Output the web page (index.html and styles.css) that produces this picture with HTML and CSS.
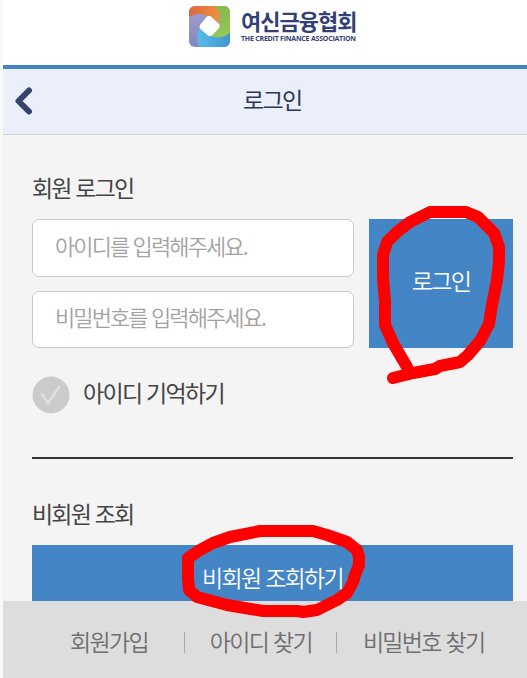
FILE: index.html
```html
<!doctype html>
<html lang="ko">
	<head>
		<meta charset="utf-8" />
		<title>여신금융협회</title>
		<link rel="stylesheet" href="styles.css">
	</head>
	<body>
		<div class="app">
			<header class="brand">
				<svg class="mark" viewBox="0 0 41 41">
					<defs>
						<clipPath id="tile"><rect width="41" height="41" rx="6" /></clipPath>
						<linearGradient id="orange"><stop offset="0" stop-color="#df6840" /><stop offset="1" stop-color="#eb9440" /></linearGradient>
						<linearGradient id="green" x2="0" y2="1"><stop offset="0" stop-color="#86b84e" /><stop offset="1" stop-color="#94c858" /></linearGradient>
						<linearGradient id="blue"><stop offset="0" stop-color="#58bce8" /><stop offset="1" stop-color="#3f96d2" /></linearGradient>
						<linearGradient id="violet" x2="0" y2="1"><stop offset="0" stop-color="#a3a0d4" /><stop offset="1" stop-color="#8088bc" /></linearGradient>
					</defs>
					<g clip-path="url(#tile)">
						<rect width="41" height="41" fill="url(#violet)" />
						<path d="M0 11V0H33L29 20L20 11Q10 5 0 11Z" fill="url(#orange)" />
						<path d="M26 0H41V29Q30 35 20 30L29 20Q35 9 26 0Z" fill="url(#green)" />
						<path d="M10 41Q6 29 12 20L21 29Q31 35 41 27V41Z" fill="url(#blue)" />
						<path d="M18 10.500Q20 9 22 10.500L30 18Q31.500 20 30 22L23 29.500Q21 31 19 29.500L11.500 23Q9.500 21 11 19Z" fill="#fff" />
					</g>
				</svg>
				<div class="name">
					<strong>여신금융협회</strong>
					<small>THE CREDIT FINANCE ASSOCIATION</small>
				</div>
			</header>

			<nav class="titlebar">
				<svg class="back" viewBox="0 0 18 28"><path d="M14 3.500L3.500 14L14 24.500" /></svg>
				<h1>로그인</h1>
			</nav>

			<main>
				<h2>회원 로그인</h2>
				<form class="login">
					<div class="fields">
						<input type="text" placeholder="아이디를 입력해주세요." />
						<input type="password" placeholder="비밀번호를 입력해주세요." />
					</div>
					<button type="button">로그인</button>
				</form>
				<div class="remember">
					<svg viewBox="0 0 38 38"><circle cx="19" cy="19" r="18.500" /><path d="M10 18L16 27L27 11" /></svg>
					<span>아이디 기억하기</span>
				</div>
				<hr />
				<h2 class="guest-title">비회원 조회</h2>
				<button type="button" class="guest">비회원 조회하기</button>
			</main>

			<footer>
				<a>회원가입</a>
				<i></i>
				<a>아이디 찾기</a>
				<i></i>
				<a>비밀번호 찾기</a>
			</footer>
		</div>

		<svg class="marker" viewBox="0 0 527 678">
			<path d="M393 378L413 373L435 369L440 366L460 362L468 355L480 341L489 324L492 305L497 280L499 262V247L494 233L487 226L478 217L466 212H430L410 222L397 232L387 242L383 255V278L385 302V325L393 343L407 367" />
			<path d="M260 531H313L327 535L347 542L357 550L359 557V565L355 575L353 582L347 593L337 600L317 610L303 612L297 611H263L227 605L197 597L189 590L188 578V558L200 550L213 543L230 537Z" />
		</svg>
	</body>
</html>
```

FILE: styles.css
```css
* {
	box-sizing: border-box;
}

body {
	margin: 0;
	background: #f9f9f9;
	font-family: "Noto Sans CJK KR", sans-serif;
	font-size: 23px;
	letter-spacing: -1.7px;
	color: #444;
}

.app {
	display: flex;
	flex-direction: column;
	height: 678px;
	margin-left: 3px;
	overflow: hidden;
}

.brand {
	display: flex;
	flex: none;
	height: 69px;
	padding: 6px 0 0 186px;
	background: #fff;
	border-bottom: 4px solid #4385c5;
}

.mark {
	width: 41px;
	height: 41px;
}

.name {
	margin-left: 11px;
	color: #343f78;
}

.name strong, .name small {
	display: block;
	white-space: nowrap;
}

.name strong {
	font-size: 22px;
	line-height: 28px;
	letter-spacing: -1px;
}

.name small {
	font: bold 7px/9px "Open Sans", sans-serif;
	letter-spacing: -.22px;
}

.titlebar {
	display: flex;
	flex: none;
	align-items: center;
	height: 66px;
	padding-left: 12px;
	background: #eaeff9;
	border-bottom: 1px solid #c9d4d8;
}

.back {
	width: 18px;
	height: 28px;
	margin-bottom: 2px;
	fill: none;
	stroke: #35436f;
	stroke-width: 6;
	stroke-linecap: round;
	stroke-linejoin: round;
}

h1 {
	margin: 0 0 5px 210px;
	font-size: 23px;
	font-weight: 400;
	color: #2b3858;
}

main {
	flex: 1;
	min-height: 0;
	padding: 35px 14px 0 29px;
	background: #f4f4f4;
	overflow: hidden;
}

h2 {
	margin: 0;
	font-size: 23px;
	font-weight: 400;
	line-height: 34px;
	letter-spacing: -1.8px;
}

.login {
	display: flex;
	gap: 15px;
	margin-top: 15px;
}

.fields {
	display: flex;
	flex-direction: column;
	gap: 14px;
	width: 322px;
}

input {
	width: 100%;
	height: 57.5px;
	padding: 0 22px 6px;
	font: inherit;
	font-size: 22px;
	font-weight: 350;
	letter-spacing: -1.9px;
	background: #fff;
	border: 1px solid #c8c8c8;
	border-radius: 7px;
}

input::placeholder {
	color: #a2a2a2;
}

button {
	flex: 1;
	padding: 0 0 7px;
	font: inherit;
	font-weight: 350;
	letter-spacing: inherit;
	color: #fff;
	background: #4385c5;
	border: 0;
}

.remember {
	display: flex;
	align-items: center;
	height: 38px;
	margin-top: 28px;
}

.remember svg {
	width: 38px;
	height: 38px;
	fill: #cbcbcb;
}

.remember path {
	fill: none;
	stroke: #dedede;
	stroke-width: 3;
	stroke-linecap: round;
	stroke-linejoin: round;
}

.remember span {
	margin: 0 0 6px 13px;
}

hr {
	height: 2px;
	margin: 43px 0 0;
	background: #333;
	border: 0;
}

.guest-title {
	margin-top: 37px;
}

.guest {
	display: block;
	width: 100%;
	height: 68px;
	margin-top: 15px;
	padding: 0 0 4px;
}

footer {
	display: flex;
	flex: none;
	align-items: center;
	height: 77px;
	padding: 0 0 0 67px;
	background: #ddd;
	color: #6e6e6e;
	font-weight: 350;
}

footer a {
	margin-top: 2px;
	white-space: nowrap;
}

footer i {
	width: 1px;
	height: 21px;
	margin: 5px 25px 0 36px;
	background: #aaa;
}

footer i:nth-of-type(2) {
	margin: 5px 26px 0 24px;
}

.marker {
	position: absolute;
	top: 0;
	left: 0;
	width: 527px;
	height: 678px;
	fill: none;
	stroke: #f00;
	stroke-width: 12;
	stroke-linecap: round;
	stroke-linejoin: round;
	pointer-events: none;
}
```
